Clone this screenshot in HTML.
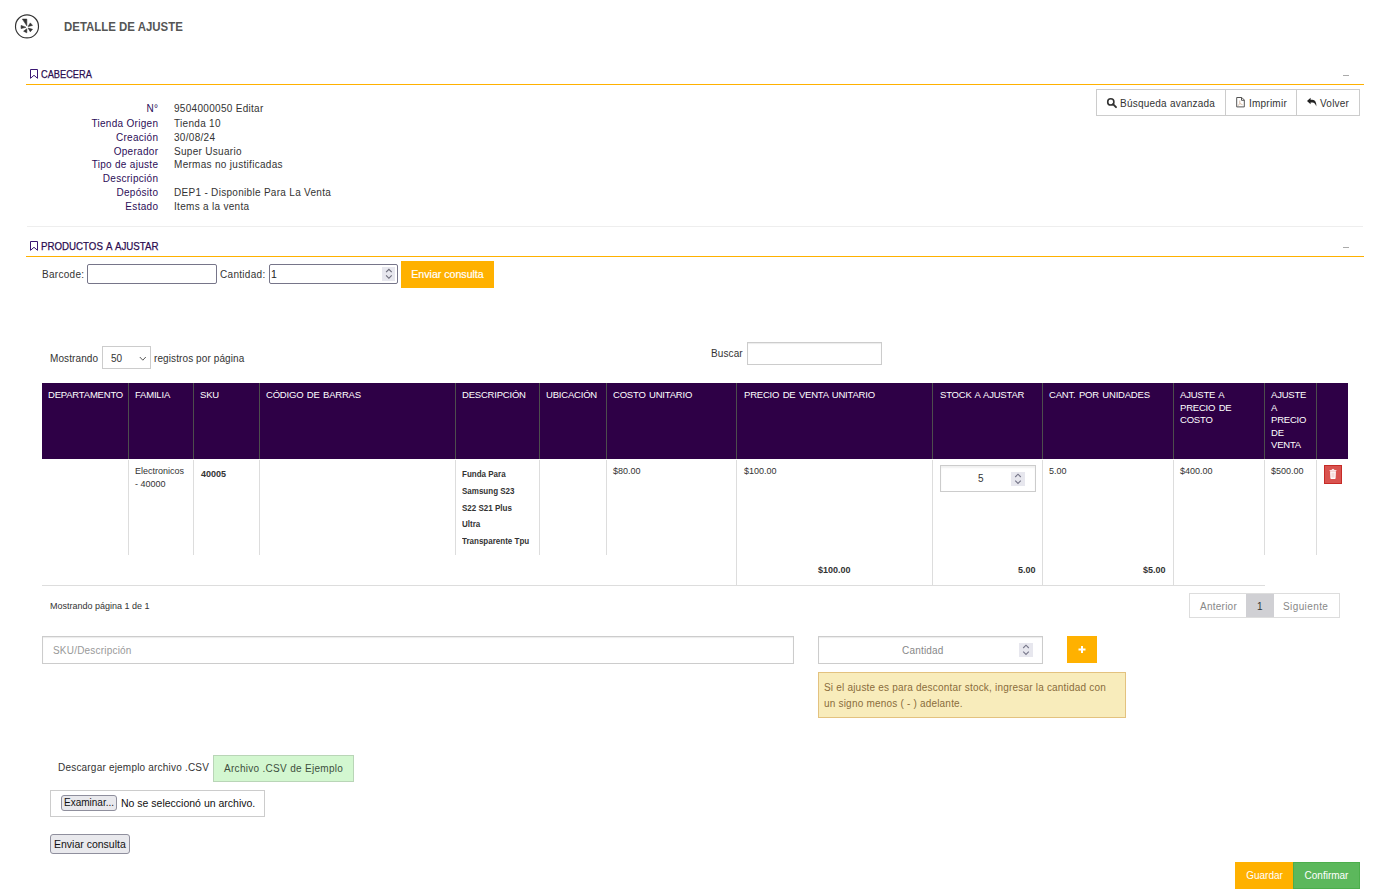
<!DOCTYPE html>
<html><head><meta charset="utf-8">
<style>
*{box-sizing:border-box;margin:0;padding:0}
html,body{width:1373px;height:893px;overflow:hidden;background:#fff;font-family:"Liberation Sans",sans-serif;color:#333}
.a{position:absolute;white-space:nowrap}
svg{position:absolute;overflow:visible}
.title{left:64px;top:19px;font-size:13px;font-weight:bold;color:#555;transform:scaleX(.88);transform-origin:0 0}
.box{left:27px;width:1336px;height:1px;background:#eee}
.sec{font-size:11px;word-spacing:1px;color:#2b0c50;-webkit-text-stroke:.25px #2b0c50;transform:scaleX(.84);transform-origin:0 0}
.oline{height:1px;background:#ffb100;left:26px;width:1338px}
.dash{width:6px;height:1px;background:#aaa}
.lbl{font-size:10px;letter-spacing:.3px;color:#2c0d58;text-align:right;width:120.3px;left:38px}
.val{font-size:10px;letter-spacing:.3px;color:#333;left:174px}
.bgrp{left:1096px;top:89px;height:27px;width:264px;border:1px solid #ccc}
.vd{width:1px;background:#ccc;height:25px;top:90px}
.bt{font-size:10px;letter-spacing:.23px;color:#333;top:98px}
.inp{border:1px solid #767589;border-radius:2px;background:#fff}
.btn-o{background:#ffb100;color:#fff;text-align:center}
.spin{background:#e7e7ee}
.th{font-size:9.5px;letter-spacing:-.2px;word-spacing:1px;color:#fff;line-height:12.5px}
.td{font-size:9px;color:#333;line-height:12.7px}
.b{font-weight:bold}
.desc{font-size:9px;font-weight:bold;color:#333;line-height:16.75px;transform:scaleX(.89);transform-origin:0 0}
.tf{font-size:9px;font-weight:bold;color:#333}
.dt{font-size:10px;letter-spacing:.1px;color:#333}
</style></head><body>
<svg style="left:12px;top:11px" width="30" height="30" viewBox="0 0 30 30">
 <circle cx="15" cy="15.4" r="11.5" fill="none" stroke="#333" stroke-width="1.15"/>
 <g fill="#333" stroke="#333" stroke-width=".6" stroke-linejoin="round">
  <polygon points="10.4,8.1 14.8,8.1 14.8,14.8"/>
  <polygon points="16.1,15.5 18.3,11.9 20.5,14.4"/>
  <polygon points="9.1,14.4 9.1,17.6 13.9,16.3"/>
  <polygon points="11.6,20.2 14.8,17.8 14.8,21.8"/>
  <polygon points="16.1,17.1 20.5,18.3 18.3,20.8"/>
 </g>
</svg>
<div class="a title">DETALLE DE AJUSTE</div>

<div class="a box" style="top:226px"></div>
<svg style="left:0;top:0" width="1" height="1"><path d="M30.5,69.5 H37.5 V78.3 L34,75.3 L30.5,78.3 Z" fill="none" stroke="#3a1673" stroke-width="1"/></svg>
<div class="a sec" style="left:41px;top:68px">CABECERA</div>
<div class="a oline" style="top:84px"></div>
<div class="a dash" style="left:1343px;top:75px"></div>

<div class="a lbl" style="top:102.7px">N°</div><div class="a val" style="top:102.7px">9504000050 Editar</div>
<div class="a lbl" style="top:118px">Tienda Origen</div><div class="a val" style="top:118px">Tienda 10</div>
<div class="a lbl" style="top:131.9px">Creación</div><div class="a val" style="top:131.9px">30/08/24</div>
<div class="a lbl" style="top:146px">Operador</div><div class="a val" style="top:146px">Super Usuario</div>
<div class="a lbl" style="top:159.3px">Tipo de ajuste</div><div class="a val" style="top:159.3px">Mermas no justificadas</div>
<div class="a lbl" style="top:172.7px">Descripción</div>
<div class="a lbl" style="top:187.3px">Depósito</div><div class="a val" style="top:187.3px">DEP1 - Disponible Para La Venta</div>
<div class="a lbl" style="top:201.1px">Estado</div><div class="a val" style="top:201.1px">Items a la venta</div>

<div class="a bgrp"></div>
<div class="a vd" style="left:1225px"></div>
<div class="a vd" style="left:1296px"></div>
<svg style="left:0;top:0" width="1" height="1">
 <circle cx="1110.8" cy="101.9" r="3.1" fill="none" stroke="#333" stroke-width="1.6"/>
 <path d="M1113,104.2 L1116,107.2" stroke="#333" stroke-width="1.9" stroke-linecap="round"/>
 <path d="M1236.7,97.5 H1241.8 L1244.3,100 V106.9 H1236.7 Z" fill="none" stroke="#555" stroke-width="1"/>
 <path d="M1241.5,97.6 V100.3 H1244.2" fill="none" stroke="#555" stroke-width="1"/>
 <path d="M1239.8,100.5 V103.5 L1238,105.8 M1239.8,103.5 L1242.6,104.8" fill="none" stroke="#c9a080" stroke-width=".7"/>
 <path d="M1307,101 L1310.6,97.8 V99.8 H1312.5 Q1316.5,99.8 1316.3,106.6 Q1315,102.4 1312.5,102.4 H1310.6 V104.2 Z" fill="#222"/>
</svg>
<div class="a bt" style="left:1120px">Búsqueda avanzada</div>
<div class="a bt" style="left:1249px">Imprimir</div>
<div class="a bt" style="left:1320px">Volver</div>

<svg style="left:0;top:0" width="1" height="1"><path d="M30.5,241.5 H37.5 V250.3 L34,247.3 L30.5,250.3 Z" fill="none" stroke="#3a1673" stroke-width="1"/></svg>
<div class="a sec" style="left:41px;top:240px;transform:scaleX(.883)">PRODUCTOS A AJUSTAR</div>
<div class="a oline" style="top:256px"></div>
<div class="a dash" style="left:1343px;top:247px"></div>


<div class="a" style="left:42px;top:269px;font-size:10px;letter-spacing:.3px;color:#333">Barcode:</div>
<div class="a inp" style="left:87px;top:264px;width:130px;height:20px"></div>
<div class="a" style="left:220px;top:269px;font-size:10px;letter-spacing:.3px;color:#333">Cantidad:</div>
<div class="a inp" style="left:269px;top:264px;width:129px;height:20px"></div>
<div class="a" style="left:271px;top:268px;font-size:10.5px;color:#222">1</div>
<div class="a spin" style="left:382px;top:267px;width:13px;height:14px"></div>
<svg style="left:0;top:0" width="1" height="1"><path d="M386.1,272.2 L388.9,269.4 L391.7,272.2 M386.1,275.4 L388.9,278.3 L391.7,275.4" fill="none" stroke="#6a6a78" stroke-width="1.1"/></svg>
<div class="a btn-o" style="left:401px;top:261px;width:93px;height:27px;line-height:27px;font-size:10.6px;-webkit-text-stroke:.2px #fff">Enviar consulta</div>

<div class="a dt" style="left:50px;top:353px">Mostrando</div>
<div class="a" style="left:102px;top:346px;width:49px;height:23px;border:1px solid #ccc;background:#fff"></div>
<div class="a" style="left:111px;top:353px;font-size:10px;color:#333">50</div>
<svg style="left:0;top:0" width="1" height="1"><path d="M139.8,357 L142.8,360.2 L145.8,357" fill="none" stroke="#444" stroke-width=".9"/></svg>
<div class="a dt" style="left:154px;top:353px">registros por página</div>
<div class="a dt" style="left:711px;top:348px">Buscar</div>
<div class="a" style="left:747px;top:342px;width:135px;height:23px;border:1px solid #ccc;box-shadow:inset 0 1px 1px rgba(0,0,0,.08)"></div>

<div class="a" style="left:42px;top:383px;width:1306px;height:76px;background:#2e0046"></div>
<div class="a" style="left:128px;top:383px;width:1px;height:76px;background:#4d4d4d"></div>
<div class="a" style="left:128px;top:460px;width:1px;height:95px;background:#ddd"></div>
<div class="a" style="left:193px;top:383px;width:1px;height:76px;background:#4d4d4d"></div>
<div class="a" style="left:193px;top:460px;width:1px;height:95px;background:#ddd"></div>
<div class="a" style="left:259px;top:383px;width:1px;height:76px;background:#4d4d4d"></div>
<div class="a" style="left:259px;top:460px;width:1px;height:95px;background:#ddd"></div>
<div class="a" style="left:455px;top:383px;width:1px;height:76px;background:#4d4d4d"></div>
<div class="a" style="left:455px;top:460px;width:1px;height:95px;background:#ddd"></div>
<div class="a" style="left:539px;top:383px;width:1px;height:76px;background:#4d4d4d"></div>
<div class="a" style="left:539px;top:460px;width:1px;height:95px;background:#ddd"></div>
<div class="a" style="left:606px;top:383px;width:1px;height:76px;background:#4d4d4d"></div>
<div class="a" style="left:606px;top:460px;width:1px;height:95px;background:#ddd"></div>
<div class="a" style="left:736px;top:383px;width:1px;height:76px;background:#4d4d4d"></div>
<div class="a" style="left:736px;top:460px;width:1px;height:95px;background:#ddd"></div>
<div class="a" style="left:932px;top:383px;width:1px;height:76px;background:#4d4d4d"></div>
<div class="a" style="left:932px;top:460px;width:1px;height:95px;background:#ddd"></div>
<div class="a" style="left:1042px;top:383px;width:1px;height:76px;background:#4d4d4d"></div>
<div class="a" style="left:1042px;top:460px;width:1px;height:95px;background:#ddd"></div>
<div class="a" style="left:1173px;top:383px;width:1px;height:76px;background:#4d4d4d"></div>
<div class="a" style="left:1173px;top:460px;width:1px;height:95px;background:#ddd"></div>
<div class="a" style="left:1264px;top:383px;width:1px;height:76px;background:#4d4d4d"></div>
<div class="a" style="left:1264px;top:460px;width:1px;height:95px;background:#ddd"></div>
<div class="a" style="left:1316px;top:383px;width:1px;height:76px;background:#4d4d4d"></div>
<div class="a" style="left:1316px;top:460px;width:1px;height:95px;background:#ddd"></div>
<div class="a" style="left:736px;top:555px;width:1px;height:30px;background:#ddd"></div>
<div class="a" style="left:932px;top:555px;width:1px;height:30px;background:#ddd"></div>
<div class="a" style="left:1042px;top:555px;width:1px;height:30px;background:#ddd"></div>
<div class="a" style="left:1173px;top:555px;width:1px;height:30px;background:#ddd"></div>
<div class="a" style="left:42px;top:585px;width:1223px;height:1px;background:#ddd"></div>
<div class="a th" style="left:48px;top:389px">DEPARTAMENTO</div>
<div class="a th" style="left:135px;top:389px">FAMILIA</div>
<div class="a th" style="left:200px;top:389px">SKU</div>
<div class="a th" style="left:266px;top:389px">CÓDIGO DE BARRAS</div>
<div class="a th" style="left:462px;top:389px">DESCRIPCIÓN</div>
<div class="a th" style="left:546px;top:389px">UBICACIÓN</div>
<div class="a th" style="left:613px;top:389px">COSTO UNITARIO</div>
<div class="a th" style="left:744px;top:389px">PRECIO DE VENTA UNITARIO</div>
<div class="a th" style="left:940px;top:389px">STOCK A AJUSTAR</div>
<div class="a th" style="left:1049px;top:389px">CANT. POR UNIDADES</div>
<div class="a th" style="left:1180px;top:389px">AJUSTE A<br>PRECIO DE<br>COSTO</div>
<div class="a th" style="left:1271px;top:389px">AJUSTE<br>A<br>PRECIO<br>DE<br>VENTA</div>

<div class="a td" style="left:135px;top:465px">Electronicos<br>- 40000</div>
<div class="a td b" style="left:201px;top:468px">40005</div>
<div class="a desc" style="left:462px;top:466px">Funda Para<br>Samsung S23<br>S22 S21 Plus<br>Ultra<br>Transparente Tpu</div>
<div class="a td" style="left:613px;top:465px">$80.00</div>
<div class="a td" style="left:744px;top:465px">$100.00</div>
<div class="a" style="left:940px;top:465px;width:96px;height:27px;border:1px solid #ccc;box-shadow:inset 0 2px 2px rgba(0,0,0,.06)"></div>
<div class="a" style="left:978px;top:473px;font-size:10px;color:#333">5</div>
<div class="a spin" style="left:1011px;top:472px;width:14px;height:14px"></div>
<svg style="left:0;top:0" width="1" height="1"><path d="M1015.2,477 L1018,474.2 L1020.8,477 M1015.2,480.6 L1018,483.4 L1020.8,480.6" fill="none" stroke="#77778a" stroke-width="1.1"/></svg>
<div class="a td" style="left:1049px;top:465px">5.00</div>
<div class="a td" style="left:1180px;top:465px">$400.00</div>
<div class="a td" style="left:1271px;top:465px">$500.00</div>
<div class="a" style="left:1324px;top:465px;width:18px;height:19px;background:#d9534f;border:1px solid #c62b27"></div>
<svg style="left:0;top:0" width="1" height="1"><path d="M1329.6,470.6 H1336.4 M1331.8,470.4 Q1331.8,469.3 1333,469.3 Q1334.2,469.3 1334.2,470.4" fill="none" stroke="#fff" stroke-width=".9"/><path d="M1330.1,471.3 H1335.9 L1335.6,478.3 Q1335.5,479 1334.8,479 H1331.2 Q1330.5,479 1330.4,478.3 Z" fill="#fff"/><path d="M1332.1,472.6 V477.6 M1333.9,472.6 V477.6" stroke="#e49a97" stroke-width=".6"/></svg>
<div class="a tf" style="left:818px;top:565px">$100.00</div>
<div class="a tf" style="left:1018px;top:565px">5.00</div>
<div class="a tf" style="left:1143px;top:565px">$5.00</div>

<div class="a" style="left:50px;top:601px;font-size:9px;color:#333">Mostrando página 1 de 1</div>
<div class="a" style="left:1189px;top:593px;width:151px;height:25px;border:1px solid #ddd;background:#fff"></div>
<div class="a" style="left:1246px;top:594px;width:28px;height:23px;background:#d0d0d4"></div>
<div class="a" style="left:1200px;top:601px;font-size:10px;letter-spacing:.25px;color:#888">Anterior</div>
<div class="a" style="left:1257px;top:601px;font-size:10px;color:#333">1</div>
<div class="a" style="left:1283px;top:601px;font-size:10px;letter-spacing:.4px;color:#888">Siguiente</div>

<div class="a" style="left:42px;top:636px;width:752px;height:28px;border:1px solid #ccc;box-shadow:inset 0 1px 1px rgba(0,0,0,.08)"></div>
<div class="a" style="left:53px;top:645px;font-size:10px;letter-spacing:.2px;color:#999">SKU/Descripción</div>
<div class="a" style="left:818px;top:636px;width:225px;height:28px;border:1px solid #ccc;box-shadow:inset 0 1px 1px rgba(0,0,0,.08)"></div>
<div class="a" style="left:902px;top:645px;font-size:10px;letter-spacing:.2px;color:#888">Cantidad</div>
<div class="a spin" style="left:1019px;top:643px;width:14px;height:14px"></div>
<svg style="left:0;top:0" width="1" height="1"><path d="M1023.2,648 L1026,645.2 L1028.8,648 M1023.2,651.6 L1026,654.4 L1028.8,651.6" fill="none" stroke="#77778a" stroke-width="1.1"/></svg>
<div class="a btn-o" style="left:1067px;top:636px;width:30px;height:27px"></div>
<svg style="left:0;top:0" width="1" height="1"><path d="M1082,646 V653 M1078.5,649.5 H1085.5" stroke="#fff" stroke-width="2"/></svg>
<div class="a" style="left:818px;top:672px;width:308px;height:46px;background:#f8ecbb;border:1px solid #e3c27f"></div>
<div class="a" style="left:824px;top:680px;font-size:10px;letter-spacing:.2px;line-height:16px;color:#8a6d3b">Si el ajuste es para descontar stock, ingresar la cantidad con<br>un signo menos ( - ) adelante.</div>

<div class="a" style="left:58px;top:762px;font-size:10px;letter-spacing:.2px;color:#333">Descargar ejemplo archivo .CSV</div>
<div class="a" style="left:213px;top:755px;width:141px;height:27px;background:#d3f7d0;border:1px solid #b9d5b7"></div>
<div class="a" style="left:224px;top:763px;font-size:10px;letter-spacing:.3px;color:#3d4f3d">Archivo .CSV de Ejemplo</div>
<div class="a" style="left:50px;top:790px;width:215px;height:27px;border:1px solid #ccc"></div>
<div class="a" style="left:61px;top:795px;width:56px;height:16px;border:1px solid #8f8f9d;border-radius:3px;background:#e9e9ed"></div>
<div class="a" style="left:64px;top:797px;font-size:10px;color:#111">Examinar...</div>
<div class="a" style="left:121px;top:797px;font-size:10.5px;color:#111">No se seleccionó un archivo.</div>
<div class="a" style="left:50px;top:834px;width:80px;height:20px;border:1px solid #8f8f9d;border-radius:3px;background:#e9e9ed"></div>
<div class="a" style="left:54px;top:838px;font-size:10.5px;color:#111">Enviar consulta</div>

<div class="a btn-o" style="left:1235px;top:862px;width:59px;height:27px;line-height:27px;font-size:10px">Guardar</div>
<div class="a" style="left:1293px;top:862px;width:67px;height:27px;line-height:25px;background:#5cb85c;border:1px solid #4cae4c;color:#fff;font-size:10px;text-align:center">Confirmar</div>

</body></html>
